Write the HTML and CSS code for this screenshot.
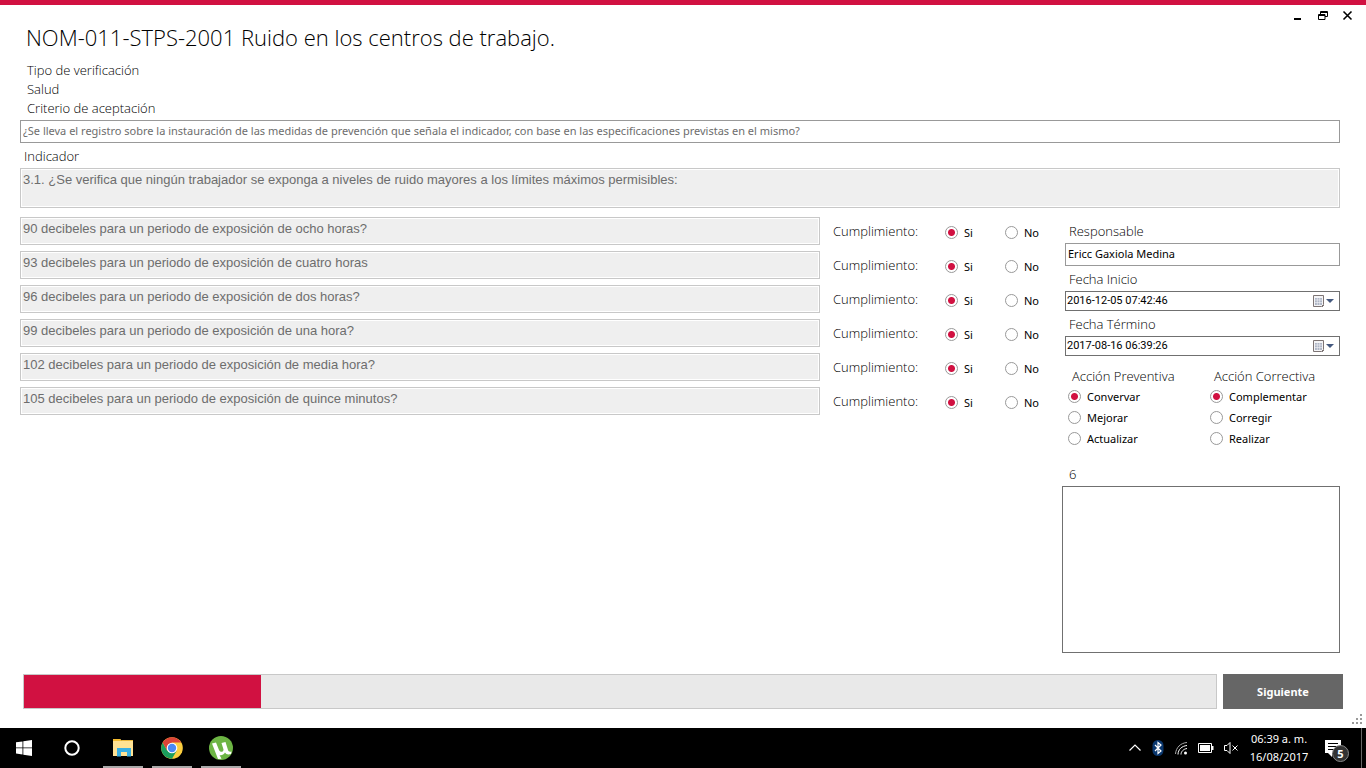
FILE: index.html
```html
<!DOCTYPE html>
<html lang="es">
<head>
<meta charset="utf-8">
<meta name="viewport" content="width=device-width, initial-scale=1">
<title>NOM-011-STPS-2001</title>
<link rel="stylesheet" href="styles.css">
</head>
<body>
<main class="window">
  <header class="titlebar">
    <h1 class="title">NOM-011-STPS-2001 Ruido en los centros de trabajo.</h1>
    <div class="window-controls">
      <button class="control" type="button" aria-label="Minimizar"><svg width="12" height="12" viewBox="0 0 12 12"><path d="M2 8h7v2H2z"/></svg></button>
      <button class="control" type="button" aria-label="Restaurar"><svg width="12" height="12" viewBox="0 0 12 12" fill="none" stroke="#000"><path d="M3.500 4V1.500H10.500V6.500H8M3.500 2.500H10.500M1.500 4.500H8V9.500H1.500zM1.500 5.500H8"/></svg></button>
      <button class="control" type="button" aria-label="Cerrar"><svg width="12" height="12" viewBox="0 0 12 12" fill="none" stroke="#000" stroke-width="1.600"><path d="M1.500 1.500l8 8M9.500 1.500l-8 8"/></svg></button>
    </div>
  </header>

  <form class="form">
    <div class="meta">
      <span>Tipo de verificación</span>
      <span>Salud</span>
      <label for="criterio">Criterio de aceptación</label>
    </div>
    <input class="field criterio" id="criterio" readonly value="¿Se lleva el registro sobre la instauración de las medidas de prevención que señala el indicador, con base en las especificaciones previstas en el mismo?">
    <label class="label indicador-label" for="indicador">Indicador</label>
    <textarea class="box indicador" id="indicador" readonly>3.1. ¿Se verifica que ningún trabajador se exponga a niveles de ruido mayores a los límites máximos permisibles:</textarea>

    <div class="columns">
      <div class="questions">
        <div class="question">
          <input class="box" aria-label="Pregunta 1" readonly value="90 decibeles para un periodo de exposición de ocho horas?">
          <fieldset class="answer"><legend class="label">Cumplimiento:</legend>
            <label class="option"><input type="radio" name="q1" checked>Si</label><label class="option"><input type="radio" name="q1">No</label></fieldset>
        </div>
        <div class="question">
          <input class="box" aria-label="Pregunta 2" readonly value="93 decibeles para un periodo de exposición de cuatro horas">
          <fieldset class="answer"><legend class="label">Cumplimiento:</legend>
            <label class="option"><input type="radio" name="q2" checked>Si</label><label class="option"><input type="radio" name="q2">No</label></fieldset>
        </div>
        <div class="question">
          <input class="box" aria-label="Pregunta 3" readonly value="96 decibeles para un periodo de exposición de dos horas?">
          <fieldset class="answer"><legend class="label">Cumplimiento:</legend>
            <label class="option"><input type="radio" name="q3" checked>Si</label><label class="option"><input type="radio" name="q3">No</label></fieldset>
        </div>
        <div class="question">
          <input class="box" aria-label="Pregunta 4" readonly value="99 decibeles para un periodo de exposición de una hora?">
          <fieldset class="answer"><legend class="label">Cumplimiento:</legend>
            <label class="option"><input type="radio" name="q4" checked>Si</label><label class="option"><input type="radio" name="q4">No</label></fieldset>
        </div>
        <div class="question">
          <input class="box" aria-label="Pregunta 5" readonly value="102 decibeles para un periodo de exposición de media hora?">
          <fieldset class="answer"><legend class="label">Cumplimiento:</legend>
            <label class="option"><input type="radio" name="q5" checked>Si</label><label class="option"><input type="radio" name="q5">No</label></fieldset>
        </div>
        <div class="question">
          <input class="box" aria-label="Pregunta 6" readonly value="105 decibeles para un periodo de exposición de quince minutos?">
          <fieldset class="answer"><legend class="label">Cumplimiento:</legend>
            <label class="option"><input type="radio" name="q6" checked>Si</label><label class="option"><input type="radio" name="q6">No</label></fieldset>
        </div>
      </div>

      <div class="side">
        <div class="group">
          <label class="label" for="responsable">Responsable</label>
          <input class="field" id="responsable" value="Ericc Gaxiola Medina">
        </div>
        <div class="group">
          <label class="label" for="inicio">Fecha Inicio</label>
          <div class="date">
            <input id="inicio" value="2016-12-05 07:42:46">
            <button type="button" aria-label="Elegir fecha de inicio"><svg width="22" height="14" viewBox="0 0 22 14"><path d="M.500 1.500h10v9l-2 2h-8z" fill="#f4f4f6" stroke="#7d7474"/><path d="M2 4h7v7H2z" fill="#aeb6c6"/><path d="M2 6h7M2 8.500h7M4.300 4v7M6.700 4v7" stroke="#f4f4f6" stroke-width=".6"/><path d="M11 11l-2 2" stroke="#7d7474"/><path d="M13 5h8l-4 4z" fill="#44597f"/></svg></button>
          </div>
        </div>
        <div class="group">
          <label class="label" for="termino">Fecha Término</label>
          <div class="date">
            <input id="termino" value="2017-08-16 06:39:26">
            <button type="button" aria-label="Elegir fecha de término"><svg width="22" height="14" viewBox="0 0 22 14"><path d="M.500 1.500h10v9l-2 2h-8z" fill="#f4f4f6" stroke="#7d7474"/><path d="M2 4h7v7H2z" fill="#aeb6c6"/><path d="M2 6h7M2 8.500h7M4.300 4v7M6.700 4v7" stroke="#f4f4f6" stroke-width=".6"/><path d="M11 11l-2 2" stroke="#7d7474"/><path d="M13 5h8l-4 4z" fill="#44597f"/></svg></button>
          </div>
        </div>
        <div class="actions">
          <fieldset class="action">
            <legend class="label">Acción Preventiva</legend>
            <label class="option"><input type="radio" name="prev" checked>Convervar</label>
            <label class="option"><input type="radio" name="prev">Mejorar</label>
            <label class="option"><input type="radio" name="prev">Actualizar</label>
          </fieldset>
          <fieldset class="action">
            <legend class="label">Acción Correctiva</legend>
            <label class="option"><input type="radio" name="corr" checked>Complementar</label>
            <label class="option"><input type="radio" name="corr">Corregir</label>
            <label class="option"><input type="radio" name="corr">Realizar</label>
          </fieldset>
        </div>
        <label class="label notes-label" for="notas">6</label>
        <textarea class="notes" id="notas"></textarea>
      </div>
    </div>
    <div class="footer">
      <progress class="progress" value="199" max="1000" aria-label="Avance"></progress>
      <button class="next" type="button">Siguiente</button>
    </div>
  </form>
  <svg class="grip" width="12" height="12" viewBox="0 0 12 12" fill="#999"><path d="M8 0h2v2H8zM8 4h2v2H8zM4 4h2v2H4zM8 8h2v2H8zM4 8h2v2H4zM0 8h2v2H0z"/></svg>
</main>

<footer class="taskbar">
  <button class="task" type="button" aria-label="Inicio"><svg width="16" height="16" viewBox="0 0 16 16" fill="#fff"><path d="M0 2.300L6.500 1.400V7.500H0zM7.300 1.300L16 0V7.500H7.300zM0 8.300H6.500V14.500L0 13.600zM7.300 8.300H16V16L7.300 14.700z"/></svg></button>
  <button class="task" type="button" aria-label="Cortana"><svg width="16" height="16" viewBox="0 0 16 16"><circle cx="8" cy="8" r="6.700" fill="none" stroke="#fff" stroke-width="2"/></svg></button>
  <div class="apps">
    <button class="app" type="button" aria-label="Explorador de archivos"><svg width="22" height="20" viewBox="0 0 22 20"><path d="M1 1h7l2 2h11v15H1z" fill="#ffe293"/><path d="M1 1h7l2 2H1z" fill="#f5bc2f"/><path d="M9 2h12v1H10z" fill="#e8b53a"/><path d="M5 10h14v8.500h-4V14H9v4.500H5z" fill="#38afe3"/></svg></button>
    <button class="app" type="button" aria-label="Chrome"><svg width="22" height="22" viewBox="0 0 22 22"><circle cx="11" cy="11" r="10.800" fill="#fbce3f"/><path d="M1.650 5.600A10.800 10.800 0 0 0 11 21.800L15.700 13.700 11 11 6.300 13.700z" fill="#1a9f5d"/><path d="M1.650 5.600A10.800 10.800 0 0 1 20.350 5.600H11L6.300 13.700z" fill="#dc4437"/><circle cx="11" cy="11" r="5.300" fill="#fff"/><circle cx="11" cy="11" r="4.200" fill="#4a89f3"/></svg></button>
    <button class="app" type="button" aria-label="uTorrent"><svg width="24" height="24" viewBox="0 0 24 24"><circle cx="12" cy="12" r="12" fill="#6db544"/><path d="M3 7.500l4-1 3 7.500c1 2.500 4.500 2.500 4.500-.5L12.500 7l4-1 2.500 8c.5 1.500 1.500 2 3.500 1.500l-.5 2.500c-2.500 1-5 .5-6-1.500-1.500 2.500-3.500 3-5.500 2.500l2 3.800-3.500.2z" fill="#fff"/></svg></button>
  </div>
  <div class="tray">
    <svg width="14" height="14" viewBox="0 0 14 14" fill="none" stroke="#fff" stroke-width="1.200"><path d="M1.500 9.500L7 4l5.500 5.500"/></svg>
    <svg width="12" height="16" viewBox="0 0 12 16"><rect x=".5" width="11" height="16" rx="5.500" fill="#0a376e"/><path d="M3 5l6 6-3 2.500v-11L9 5l-6 6" fill="none" stroke="#fff" stroke-width="1.200"/></svg>
    <svg width="14" height="14" viewBox="0 0 14 14" fill="none" stroke="#fff"><path d="M1.500 13C2 6.500 6.500 2 13 1.500" stroke="#aaa"/><path d="M4 13.500C4 8.500 8 5 13 4.500M7 13.500C7 10.500 9.500 8 13 7.500"/><circle cx="11.500" cy="12" r="1.500" fill="#fff" stroke="none"/></svg>
    <svg width="16" height="10" viewBox="0 0 16 10"><path d="M.500 .500h13v9H.500z" fill="none" stroke="#fff"/><path d="M2 2h10v6H2zM14 3h1.500v4H14z" fill="#fff"/></svg>
    <svg width="15" height="14" viewBox="0 0 15 14" fill="none" stroke="#fff"><path d="M.500 4.500H3L6 1.500v11L3 9.500H.500zM8.500 4.500l5 5M13.500 4.500l-5 5"/></svg>
    <div class="clock"><time>06:39 a. m.</time><time>16/08/2017</time></div>
    <button class="notifications" type="button" aria-label="Notificaciones">
      <svg width="16" height="17" viewBox="0 0 16 17"><path d="M0 0h16v13H7v4l-4-4H0z" fill="#fff"/><path d="M3 3.500h10M3 6.500h10M3 9.500h7" stroke="#000"/></svg>
      <span class="badge">5</span>
    </button>
    <span class="show-desktop"></span>
  </div>
</footer>
</body>
</html>
```
FILE: styles.css
```css
* { box-sizing: border-box; }

body {
  margin: 0;
  min-height: 100vh;
  display: flex;
  flex-direction: column;
  background: #fff;
  color: #000;
  font: 11px/19px "Noto Sans", "Open Sans", sans-serif;
}

button, input, textarea { font: inherit; color: inherit; margin: 0; }
button { border: 0; padding: 0; background: none; }
fieldset { border: 0; margin: 0; padding: 0; min-width: 0; }
legend { padding: 0; }
svg { display: block; }

.window {
  position: relative;
  flex: 1;
  display: flex;
  flex-direction: column;
  border-top: 5px solid #d11141;
}

.titlebar {
  display: flex;
  justify-content: space-between;
  padding: 5px 12px 6px 26px;
}

.title {
  margin: 9px 0 0;
  font: 300 22px/36px "Open Sans", "Noto Sans", sans-serif;
}

.window-controls { display: flex; gap: 13px; }
.control { width: 12px; height: 12px; }

.form {
  flex: 1;
  display: flex;
  flex-direction: column;
  padding: 0 26px 19px 20px;
}

.meta {
  display: flex;
  flex-direction: column;
  padding-left: 7px;
  margin-bottom: 2px;
}

.meta, .label {
  font: 300 13px/19px "Open Sans", "Noto Sans", sans-serif;
}

.field {
  width: 100%;
  height: 23px;
  padding: 0 2px 2px;
  border: 1px solid #999;
  background: #fff;
}

.criterio { color: #6d6d6d; }
.indicador-label { margin: 4px 4px 2px; }

.box {
  width: 100%;
  height: 28px;
  padding: 0 2px 6px;
  border: 1px solid #c8c8c8;
  background: #efefef;
  box-shadow: inset 0 0 0 1px #fff;
  color: #6d6d6d;
  font: 13px/20px "Liberation Sans", Arial, sans-serif;
}

.indicador { height: 40px; padding: 1px 2px; resize: none; display: block; }

.columns { flex: 1; display: flex; margin-top: 9px; }

.questions {
  flex: 1;
  display: flex;
  flex-direction: column;
  gap: 6px;
}

.question { display: flex; }
.question .box { flex: 1; min-width: 0; }

.answer {
  width: 242px;
  display: flex;
  align-items: center;
  padding: 3px 0 0 13px;
}

.answer .label { float: left; width: 112px; margin-top: -3px; }
.answer .option { flex: none; width: 60px; }
.answer .option:last-child { width: 57px; }

.option { display: flex; align-items: center; gap: 6px; height: 21px; }

.option input {
  appearance: none;
  width: 13px;
  height: 13px;
  border: 1px solid #999;
  border-radius: 50%;
  background: #fff;
}

.option input:checked {
  background: radial-gradient(circle, #d11141 0 3px, #fff 4px);
}

.side {
  width: 278px;
  display: flex;
  flex-direction: column;
  padding-top: 5px;
}

.group { display: flex; flex-direction: column; gap: 2px; padding-left: 3px; margin-bottom: 4px; }
.group .label { padding-left: 4px; }

.date {
  display: flex;
  align-items: center;
  height: 20px;
  border: 1px solid #707070;
  padding-right: 4px;
}

.date input {
  flex: 1;
  min-width: 0;
  height: 18px;
  padding: 0 1px;
  border: 0;
  background: none;
  font: 11px/18px "Roboto", "Noto Sans", sans-serif;
}

.actions { display: flex; margin-top: 7px; }
.action { width: 142px; padding-left: 6px; flex: none; }
.action:last-child { width: 136px; }
.action .label { padding-left: 4px; }
.notes-label { margin: 16px 7px 2px; }

.notes {
  flex: 1;
  min-height: 60px;
  width: 100%;
  border: 1px solid #707070;
  resize: none;
}

.footer { display: flex; gap: 6px; margin: 21px -3px 0 3px; }

.progress {
  appearance: none;
  flex: 1;
  min-width: 0;
  height: 35px;
  border: 1px solid #c8c8c8;
  background: #e9e9e9;
}

.progress::-webkit-progress-bar { background: #e9e9e9; }
.progress::-webkit-progress-value { background: #d11141; }

.next {
  width: 120px;
  height: 35px;
  background: #666;
  color: #fff;
  font-weight: 700;
}

.grip { position: absolute; right: 2px; bottom: 2px; }

.taskbar {
  height: 40px;
  display: flex;
  background: #000;
  color: #fff;
}

.task { width: 48px; display: grid; place-items: center; }
.apps { display: flex; gap: 9px; padding-left: 7px; }

.app {
  width: 40px;
  display: grid;
  place-items: center;
  padding-top: 2px;
  border-bottom: 2px solid #a9a9a9;
}

.tray { display: flex; align-items: center; gap: 10px; margin-left: auto; }
.clock { width: 60px; display: flex; flex-direction: column; text-align: center; line-height: 18px; }

.notifications { position: relative; width: 32px; padding-left: 6px; }

.badge {
  position: absolute;
  left: 13px;
  top: 5px;
  width: 17px;
  height: 17px;
  border: 1px solid #888;
  border-radius: 50%;
  background: #333;
  font: 700 11px/15px "Noto Sans", sans-serif;
}

.show-desktop { width: 5px; height: 40px; border-left: 1px solid #666; }
```
